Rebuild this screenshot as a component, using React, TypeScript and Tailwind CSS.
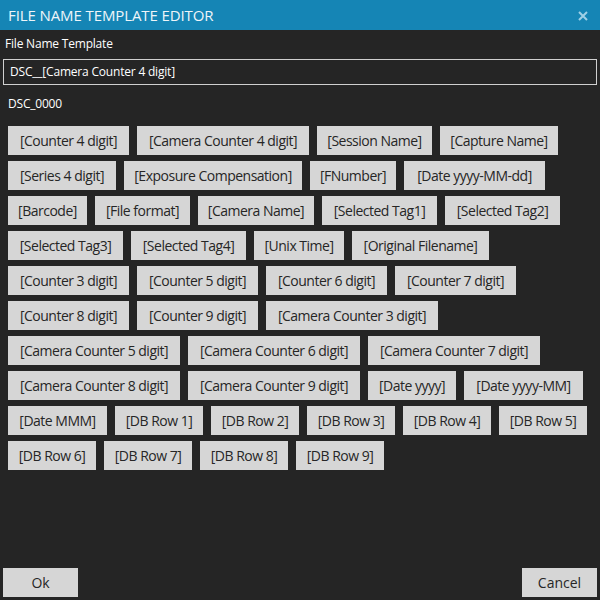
import React from "react";

const FONT = "font-['Open_Sans','Noto_Sans',sans-serif]";

// tokens with the widths measured off the dialog
const tokens: { label: string; w: string }[] = [
  { label: "[Counter 4 digit]", w: "w-[121px]" },
  { label: "[Camera Counter 4 digit]", w: "w-[172px]" },
  { label: "[Session Name]", w: "w-[115px]" },
  { label: "[Capture Name]", w: "w-[118px]" },
  { label: "[Series 4 digit]", w: "w-[108px]" },
  { label: "[Exposure Compensation]", w: "w-[178px]" },
  { label: "[FNumber]", w: "w-[86px]" },
  { label: "[Date yyyy-MM-dd]", w: "w-[141px]" },
  { label: "[Barcode]", w: "w-[79px]" },
  { label: "[File format]", w: "w-[95px]" },
  { label: "[Camera Name]", w: "w-[116px]" },
  { label: "[Selected Tag1]", w: "w-[115px]" },
  { label: "[Selected Tag2]", w: "w-[115px]" },
  { label: "[Selected Tag3]", w: "w-[115px]" },
  { label: "[Selected Tag4]", w: "w-[115px]" },
  { label: "[Unix Time]", w: "w-[90px]" },
  { label: "[Original Filename]", w: "w-[137px]" },
  { label: "[Counter 3 digit]", w: "w-[121px]" },
  { label: "[Counter 5 digit]", w: "w-[121px]" },
  { label: "[Counter 6 digit]", w: "w-[121px]" },
  { label: "[Counter 7 digit]", w: "w-[121px]" },
  { label: "[Counter 8 digit]", w: "w-[121px]" },
  { label: "[Counter 9 digit]", w: "w-[121px]" },
  { label: "[Camera Counter 3 digit]", w: "w-[172px]" },
  { label: "[Camera Counter 5 digit]", w: "w-[172px]" },
  { label: "[Camera Counter 6 digit]", w: "w-[172px]" },
  { label: "[Camera Counter 7 digit]", w: "w-[172px]" },
  { label: "[Camera Counter 8 digit]", w: "w-[172px]" },
  { label: "[Camera Counter 9 digit]", w: "w-[172px]" },
  { label: "[Date yyyy]", w: "w-[88px]" },
  { label: "[Date yyyy-MM]", w: "w-[119px]" },
  { label: "[Date MMM]", w: "w-[99px]" },
  { label: "[DB Row 1]", w: "w-[88px]" },
  { label: "[DB Row 2]", w: "w-[88px]" },
  { label: "[DB Row 3]", w: "w-[88px]" },
  { label: "[DB Row 4]", w: "w-[88px]" },
  { label: "[DB Row 5]", w: "w-[88px]" },
  { label: "[DB Row 6]", w: "w-[88px]" },
  { label: "[DB Row 7]", w: "w-[88px]" },
  { label: "[DB Row 8]", w: "w-[88px]" },
  { label: "[DB Row 9]", w: "w-[88px]" },
];

export default function App() {
  return (
    <div className={`w-[600px] h-[600px] flex flex-col bg-[#252525] text-white ${FONT}`}>
      {/* title bar */}
      <div className="h-[30px] shrink-0 bg-[#1585b5] flex items-center justify-between pl-[8px] pr-[12px]">
        <span className="text-[15px] leading-[30px] text-[#eef5f9] tracking-[-0.1px]">
          FILE NAME TEMPLATE EDITOR
        </span>
        <svg width="10" height="10" viewBox="0 0 10 10" className="mt-[1px]">
          <path d="M1 1L9 9M9 1L1 9" stroke="#9fd0e6" strokeWidth="2" />
        </svg>
      </div>

      <div className="h-[29px] shrink-0 pt-[6px] px-[5px] text-[12px] leading-[16px] font-medium tracking-[-0.2px]">
        File Name Template
      </div>

      <div className="mx-[3px] h-[26px] shrink-0 border border-[#d0d0d0] flex items-center px-[6px] text-[12px] tracking-[-0.2px]">
        DSC__[Camera Counter 4 digit]
      </div>

      <div className="h-[41px] shrink-0 pt-[11px] px-[8px] text-[12px] leading-[16px] tracking-[-0.2px]">
        DSC_0000
      </div>

      <div className="flex flex-wrap gap-x-[8px] gap-y-[6px] px-[8px]">
        {tokens.map((t) => (
          <button
            key={t.label}
            className={`${t.w} h-[29px] bg-[#d6d6d6] text-[#262626] text-[14px] leading-[29px] tracking-[-0.5px] text-center whitespace-nowrap`}
          >
            {t.label}
          </button>
        ))}
      </div>

      <div className="flex-1" />

      <div className="flex justify-between px-[3px] pb-[3px]">
        <button className="w-[75px] h-[29px] bg-[#d6d6d6] text-[#262626] text-[14px]">Ok</button>
        <button className="w-[75px] h-[29px] bg-[#d6d6d6] text-[#262626] text-[14px]">Cancel</button>
      </div>
    </div>
  );
}
